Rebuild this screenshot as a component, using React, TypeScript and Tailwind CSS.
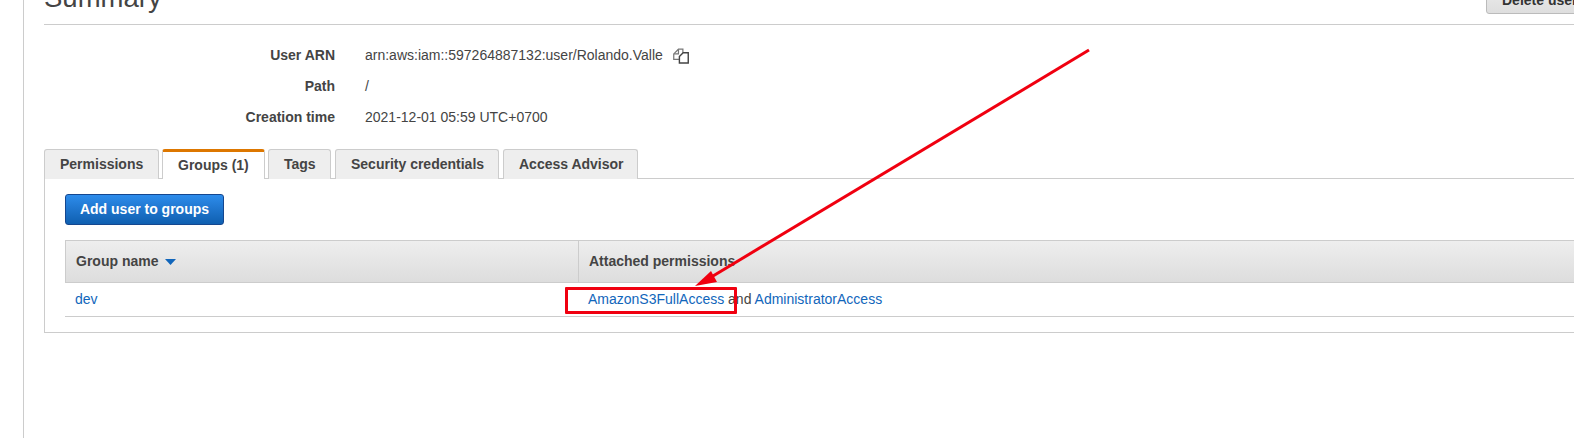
export default function App() {
  const tabBase = "h-[30px] pl-[15px] pb-[1px] whitespace-nowrap flex items-center rounded-t-[3px] border border-b-0 border-[#cccccc] bg-[#eeeeee] text-[14px] font-bold text-[#444444]";
  return (
    <div className="relative w-[1574px] h-[438px] overflow-hidden bg-white font-['Liberation_Sans',Arial,sans-serif] text-[14px] text-[#444444]">
      <div className="flex flex-col h-full ml-[23px] border-l border-[#cccccc] pl-[20px] w-[1640px]">
        <div className="-mt-[12px] h-[37px] shrink-0 border-b border-[#cccccc] flex items-start justify-between">
          <h1 className="-mt-[5px] text-[27.5px] leading-[30px] text-[#444444] font-normal">Summary</h1>
          <div className="-mt-[8px] w-[177px] h-[34px] rounded-[3px] border border-[#bbbbbb] bg-gradient-to-b from-[#f0f0f0] to-[#dedede] pt-[9px] pl-[15px] font-bold text-[#333333]">Delete user</div>
        </div>
        <div className="mt-[15px] grid grid-cols-[291px_auto] justify-start gap-x-[30px] leading-[31px]">
          <div className="text-right font-bold">User ARN</div>
          <div className="flex items-center gap-[10px]">
            <span>arn:aws:iam::597264887132:user/Rolando.Valle</span>
            <svg width="16" height="16" viewBox="0 0 17 16" fill="none" strokeWidth="1.3">
              <path d="M10.5 4.5V.8H5.8L.8 5.8v5.7h5.5" stroke="#777777" />
              <path d="M5.8 1V5.8H1" stroke="#777777" />
              <path d="M6.8 8.5l4-4h5.4v11H6.8z" stroke="#444444" strokeWidth="1.5" />
            </svg>
          </div>
          <div className="text-right font-bold">Path</div>
          <div>/</div>
          <div className="text-right font-bold">Creation time</div>
          <div>2021-12-01 05:59 UTC+0700</div>
        </div>
        <div className="mt-[16px] flex items-end relative z-10 -mb-px h-[30px] shrink-0">
          <div className={"w-[115px] " + tabBase}>Permissions</div>
          <div className="ml-[3px] w-[103px] h-[30px] pl-[15px] whitespace-nowrap flex items-center rounded-t-[3px] border border-b-0 border-[#cccccc] border-t-[3px] border-t-[#dd7700] bg-white text-[14px] font-bold text-[#444444]">Groups (1)</div>
          <div className={"ml-[3px] w-[63px] " + tabBase}>Tags</div>
          <div className={"ml-[4px] w-[164px] " + tabBase}>Security credentials</div>
          <div className={"ml-[4px] w-[135px] " + tabBase}>Access Advisor</div>
        </div>
        <div className="border border-[#cccccc] h-[155px] shrink-0 pl-[20px] pt-[15px]">
          <button className="h-[31px] w-[159px] rounded-[3px] border border-[#15478f] bg-gradient-to-b from-[#2d8ceb] to-[#0f5fb0] text-white font-bold text-[14px]">Add user to groups</button>
          <div className="mt-[15px] border-t border-l border-[#cccccc]">
            <div className="h-[42px] flex border-b border-[#cccccc] bg-gradient-to-b from-[#eeeeee] to-[#dddddd] font-bold">
              <div className="w-[513px] pl-[10px] flex items-center gap-[7px] border-r border-[#cccccc]">
                Group name
                <svg width="11" height="6" viewBox="0 0 11 6"><path d="M0 0h11L5.5 6z" fill="#1166bb" /></svg>
              </div>
              <div className="pl-[10px] flex items-center">Attached permissions</div>
            </div>
          </div>
          <div className="h-[35px] -mt-px border-b border-[#cccccc] flex items-center pt-[1px] text-[#1166bb]">
            <div className="w-[513px] pl-[10px]">dev</div>
            <div className="pl-[10px]">
              AmazonS3FullAccess <span className="text-[#444444]">and</span> AdministratorAccess
            </div>
          </div>
        </div>
      </div>
      <div className="absolute left-[565px] top-[287px] w-[172px] h-[27px] border-[3px] border-[#f00010] rounded-[1px]" />
      <svg className="absolute left-0 top-0" width="1574" height="438">
        <path d="M1089 50L708 279" stroke="#f00010" strokeWidth="3" fill="none" />
        <path d="M695 286L711 271L717 282z" fill="#f00010" />
      </svg>
    </div>
  );
}
